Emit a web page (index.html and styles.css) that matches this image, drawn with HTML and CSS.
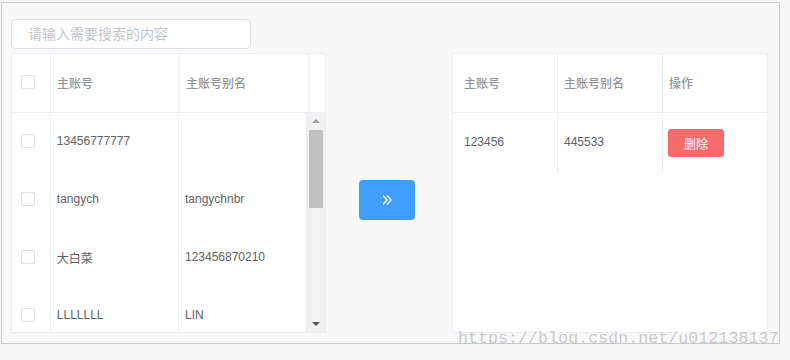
FILE: index.html
```html
<!DOCTYPE html>
<html lang="zh-CN">
<head>
    <meta charset="UTF-8">
    <title>穿梭框</title>
    <link rel="stylesheet" href="styles.css">
</head>
<body>
    <div class="frame">
        <div class="search">请输入需要搜索的内容</div>

        <div class="transfer">
            <!-- source table -->
            <div class="panel panel-left">
                <div class="thead">
                    <div class="cell cell-check"><span class="checkbox"></span></div>
                    <div class="cell cell-col">主账号</div>
                    <div class="cell cell-col">主账号别名</div>
                    <div class="cell cell-gutter"></div>
                </div>
                <div class="tbody">
                    <div class="rows">
                        <div class="row">
                            <div class="cell cell-check"><span class="checkbox"></span></div>
                            <div class="cell cell-col">13456777777</div>
                            <div class="cell cell-col"></div>
                        </div>
                        <div class="row">
                            <div class="cell cell-check"><span class="checkbox"></span></div>
                            <div class="cell cell-col">tangych</div>
                            <div class="cell cell-col">tangychnbr</div>
                        </div>
                        <div class="row">
                            <div class="cell cell-check"><span class="checkbox"></span></div>
                            <div class="cell cell-col">大白菜</div>
                            <div class="cell cell-col">123456870210</div>
                        </div>
                        <div class="row">
                            <div class="cell cell-check"><span class="checkbox"></span></div>
                            <div class="cell cell-col">LLLLLLL</div>
                            <div class="cell cell-col">LIN</div>
                        </div>
                    </div>
                    <div class="scrollbar">
                        <span class="arrow arrow-up"></span>
                        <span class="thumb"></span>
                        <span class="arrow arrow-down"></span>
                    </div>
                </div>
            </div>

            <button class="move-btn">
                <svg width="12" height="12" viewBox="0 0 12 12">
                    <polyline points="2,1.5 6,6 2,10.5" fill="none" stroke="#fff" stroke-width="1.4"/>
                    <polyline points="6,1.5 10,6 6,10.5" fill="none" stroke="#fff" stroke-width="1.4"/>
                </svg>
            </button>

            <!-- target table -->
            <div class="panel panel-right">
                <div class="thead">
                    <div class="cell cell-r first">主账号</div>
                    <div class="cell cell-r">主账号别名</div>
                    <div class="cell cell-r last">操作</div>
                </div>
                <div class="row row-r">
                    <div class="cell cell-r first">123456</div>
                    <div class="cell cell-r">445533</div>
                    <div class="cell cell-r last action"><button class="del-btn">删除</button></div>
                </div>
            </div>
        </div>

        <div class="watermark">https://blog.csdn.net/u012138137</div>
    </div>
</body>
</html>
```

FILE: styles.css
```css
body {
    margin: 0;
    background: #f9f9f9;
    font-family: "Liberation Sans", "Noto Sans CJK SC", sans-serif;
    font-size: 12px;
    color: #606266;
}
.frame {
    position: relative;
    box-sizing: border-box;
    width: 779px;
    height: 342px;
    margin: 2px 0 0 1px;
    padding: 16px 0 0 9px;
    border: 1px solid #c9c9c9;
    background: #f9f9f9;
}
.search {
    box-sizing: border-box;
    width: 240px;
    height: 30px;
    padding-left: 16px;
    border: 1px solid #dcdfe6;
    border-radius: 4px;
    background: #fff;
    color: #c0c4cc;
    font-size: 14px;
    line-height: 28px;
}
.transfer {
    display: flex;
    align-items: center;
    margin-top: 4px;
}
.panel {
    box-sizing: border-box;
    height: 280px;
    border: 1px solid #ebeef5;
    background: #fff;
    overflow: hidden;
}
.panel-left {
    width: 315px;
}
.panel-right {
    width: 316px;
}
.thead {
    display: flex;
    height: 58px;
    border-bottom: 1px solid #ebeef5;
    color: #909399;
    font-weight: 500;
}
.cell {
    box-sizing: border-box;
    display: flex;
    align-items: center;
    padding-left: 6px;
    padding-bottom: 2px;
    border-right: 1px solid #ebeef5;
}
.cell-check {
    width: 39px;
    padding-left: 9px;
}
.cell-col {
    width: 129px;
}
.cell-gutter {
    flex: 1;
    border-right: none;
}
.checkbox {
    box-sizing: border-box;
    width: 14px;
    height: 14px;
    border: 1px solid #dcdfe6;
    border-radius: 2px;
    background: #fff;
}
.tbody {
    display: flex;
    height: 220px;
}
.rows {
    width: 297px;
    overflow: hidden;
}
.row {
    display: flex;
    height: 58px;
}
.scrollbar {
    position: relative;
    width: 17px;
    background: #f1f1f1;
    border-left: 1px solid #ebeef5;
}
.thumb {
    position: absolute;
    top: 17px;
    left: 1px;
    width: 14px;
    height: 78px;
    background: #c1c1c1;
}
.arrow {
    position: absolute;
    left: 4px;
    width: 0;
    height: 0;
    border-left: 4px solid transparent;
    border-right: 4px solid transparent;
}
.arrow-up {
    top: 6px;
    border-bottom: 4px solid #a3a3a3;
}
.arrow-down {
    bottom: 7px;
    border-top: 4px solid #505050;
}
.move-btn {
    display: flex;
    align-items: center;
    justify-content: center;
    width: 56px;
    height: 40px;
    margin: 13px 37px 0 33px;
    padding: 0;
    border: none;
    border-radius: 4px;
    background: #409eff;
}
.cell-r {
    width: 105px;
    flex-shrink: 0;
}
.cell-r.first {
    width: 105px;
    padding-left: 11px;
}
.cell-r.last {
    flex: 1;
    width: auto;
    border-right: none;
}
.row-r {
    height: 60px;
}
.cell-r.action {
    padding-left: 5px;
    padding-bottom: 0;
}
.del-btn {
    width: 56px;
    height: 28px;
    padding: 0;
    border: none;
    border-radius: 3px;
    background: #f56c6c;
    color: #fff;
    font-family: inherit;
    font-size: 12px;
}
.watermark {
    position: absolute;
    left: 456px;
    top: 326px;
    font-family: "Liberation Mono", monospace;
    font-size: 16.7px;
    color: rgba(140, 140, 140, 0.45);
    white-space: nowrap;
}
```
